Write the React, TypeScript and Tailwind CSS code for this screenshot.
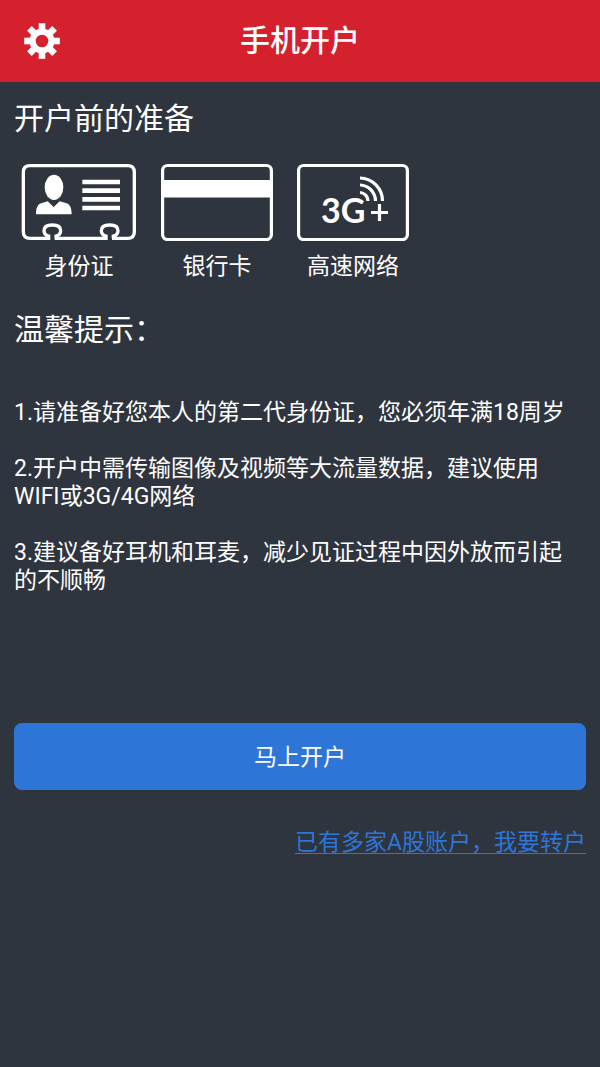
import type { ReactNode } from "react";

const GearIcon = () => {
    return (
        <svg viewBox="-18 -18 36 36" className="size-9" fill="#fff" aria-hidden="true">
            {[0, 45, 90, 135].map((angle) => (
                <rect key={angle} x="-3.3" y="-17.8" width="6.6" height="35.6" transform={`rotate(${angle})`} />
            ))}
            <circle r="12.5" />
            <circle r="6.3" fill="#d5212d" />
        </svg>
    );
};

const IdCardIcon = () => {
    return (
        <svg viewBox="0 0 348 234" className="h-[78px] w-[116px]" fill="none" stroke="#fff" strokeWidth="10" aria-hidden="true">
            <path d="M88 226H27Q7 226 7 206V28Q7 8 27 8H320Q340 8 340 28V206Q340 226 320 226H273M277 226V219C285 217 291 211 291 203C291 192 281 186 266 186C251 186 241 192 241 203C241 211 247 217 255 219V226H101M105 226V219C113 217 119 211 119 203C119 192 109 186 94 186C79 186 69 192 69 203C69 211 75 217 83 219V226M251 226H259" />
            <ellipse cx="99" cy="73" rx="28" ry="38" fill="#fff" stroke="none" />
            <path d="M45 154C45 130 52 122 65 119L80 115L98 132L116 115L132 119C145 122 152 130 152 154Z" fill="#fff" stroke="none" />
            <path d="M184 57H297M184 83H297M184 109H297M184 135H297" strokeWidth="14" />
        </svg>
    );
};

const BankCardIcon = () => {
    return (
        <svg viewBox="0 0 112 78" className="h-[78px] w-[112px]" fill="none" aria-hidden="true">
            <rect x="1.6" y="2.5" width="108.8" height="74" rx="5" stroke="#fff" strokeWidth="3.2" />
            <rect x="2" y="17" width="108" height="17.5" fill="#fff" />
        </svg>
    );
};

const NetworkIcon = () => {
    return (
        <svg viewBox="0 0 112 78" className="h-[78px] w-[112px]" fill="none" stroke="#fff" strokeWidth="3.2" aria-hidden="true">
            <rect x="1.6" y="2.5" width="108.8" height="74" rx="5" />
            <text x="24" y="60" fill="#fff" stroke="none" fontSize="34" fontWeight="700" fontFamily="Lato, sans-serif">3G</text>
            <path d="M82.500 41V58M74 49.500H91" />
            <path d="M63 29.500A8.500 8.500 0 0 1 71 38M63 22A16 16 0 0 1 78.500 38M63 15A23 23 0 0 1 85.500 38" />
        </svg>
    );
};

const PrepareItem = ({ label, children }: { label: string; children: ReactNode }) => {
    return (
        <li className="flex flex-col items-center gap-[10px]">
            {children}
            <span className="leading-8">{label}</span>
        </li>
    );
};

const tips = [
    "1.请准备好您本人的第二代身份证，您必须年满18周岁",
    "2.开户中需传输图像及视频等大流量数据，建议使用WIFI或3G/4G网络",
    "3.建议备好耳机和耳麦，减少见证过程中因外放而引起的不顺畅",
];

export default function App() {
    return (
        <div lang="zh-CN" className="min-h-screen bg-[#2f353e] font-[Roboto,'Noto_Sans_CJK_SC',sans-serif] text-[23px] text-white">
            <header className="grid grid-cols-[1fr_auto_1fr] items-center bg-[#d5212d] px-6 py-5">
                <button type="button" aria-label="设置" className="justify-self-start">
                    <GearIcon />
                </button>
                <h1 className="text-[30px] leading-[42px] font-medium">手机开户</h1>
            </header>

            <main className="px-[14px] pt-4">
                <h2 className="text-[30px] leading-[42px]">开户前的准备</h2>
                <ul className="mt-[23px] flex gap-6 pl-[7px]">
                    <PrepareItem label="身份证">
                        <IdCardIcon />
                    </PrepareItem>
                    <PrepareItem label="银行卡">
                        <BankCardIcon />
                    </PrepareItem>
                    <PrepareItem label="高速网络">
                        <NetworkIcon />
                    </PrepareItem>
                </ul>

                <h2 className="mt-[26px] text-[30px] leading-[42px]">温馨提示：</h2>
                <div className="mt-12 space-y-7 pr-4 leading-7">
                    {tips.map((tip) => (
                        <p key={tip}>{tip}</p>
                    ))}
                </div>

                <button type="button" className="mt-32 h-[67px] w-full rounded-lg bg-[#2e75d8] pt-1">
                    马上开户
                </button>
                <div className="mt-9 text-right">
                    <a href="#" className="text-[#2e75d8] underline decoration-1 underline-offset-3">
                        已有多家A股账户，我要转户
                    </a>
                </div>
            </main>
        </div>
    );
}
